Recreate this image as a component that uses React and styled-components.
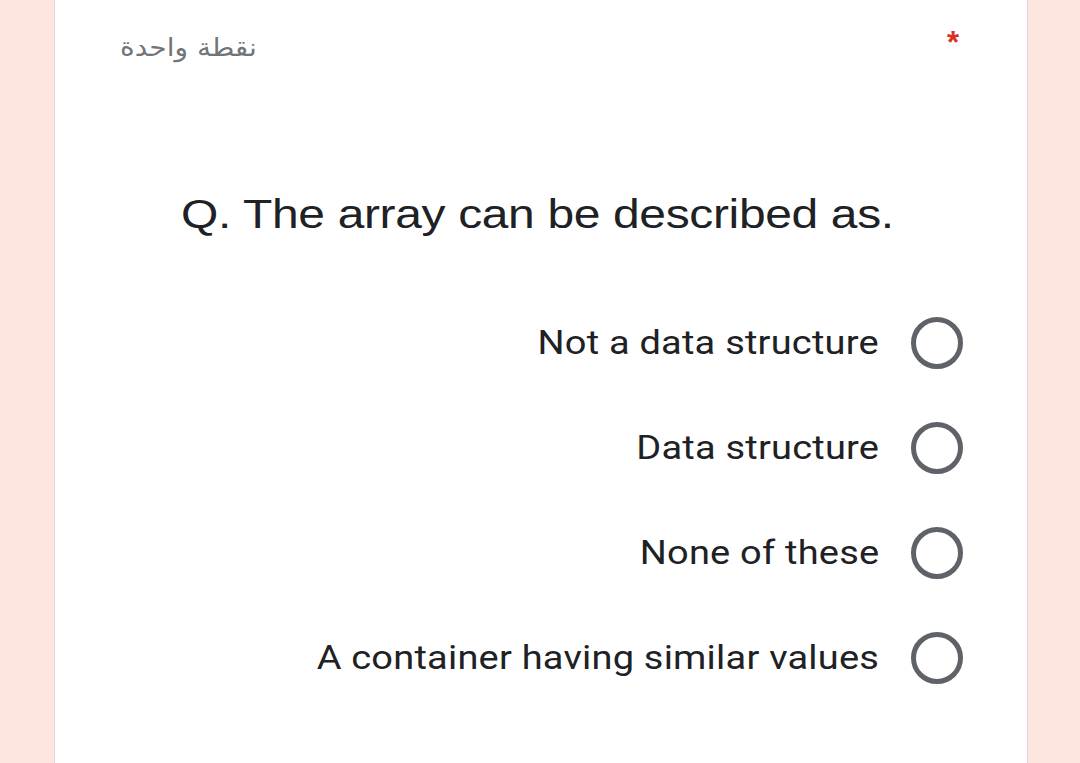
import React from 'react';
import styled, { createGlobalStyle } from 'styled-components';

const GlobalStyle = createGlobalStyle`
  html, body {
    margin: 0;
    padding: 0;
    background-color: #fde5e0;
  }
  body {
    font-family: Roboto, 'Liberation Sans', sans-serif;
    overflow: hidden;
  }
`;

const options = [
  'Not a data structure',
  'Data structure',
  'None of these',
  'A container having similar values',
];

const App = () => {
  return (
    <>
      <GlobalStyle />
      <Page>
        <Card>
          <Header>
            <Points lang="ar" dir="rtl">
              نقطة واحدة
            </Points>
            <Required>*</Required>
          </Header>

          <Question>Q. The array can be described as.</Question>

          <OptionList>
            {options.map(option => (
              <Option key={option}>
                <OptionLabel>{option}</OptionLabel>
                <Radio />
              </Option>
            ))}
          </OptionList>
        </Card>
      </Page>
    </>
  );
};

const Page = styled.div`
  display: flex;
  width: 100vw;
  height: 100vh;
  padding-left: 54px;
  box-sizing: border-box;
`;

const Card = styled.div`
  display: flex;
  flex-direction: column;
  width: 974px;
  height: 100%;
  box-sizing: border-box;
  padding: 0 64px 0 65px;
  background-color: white;
  border-left: 1px solid #e3d7d5;
  border-right: 1px solid #e3d7d5;
`;

const Header = styled.div`
  display: flex;
  align-items: center;
  justify-content: space-between;
  height: 96px;
`;

/* the screenshot is stretched sideways a little, so text gets a scaleX */
const Points = styled.span`
  display: inline-block;
  font-family: 'DejaVu Sans', sans-serif;
  font-size: 25px;
  color: #70757a;
  margin-top: -2px;
  transform: scaleX(1.12);
  transform-origin: left center;
`;

const Required = styled.span`
  font-family: 'Liberation Sans', sans-serif;
  font-size: 31px;
  font-weight: bold;
  color: #d93025;
  margin-right: 4px;
  margin-top: -10px;
`;

const Question = styled.div`
  align-self: flex-start;
  margin: 94px 0 0 61px;
  font-family: 'Liberation Sans', Arial, sans-serif;
  font-size: 41px;
  line-height: 48px;
  color: #202124;
  letter-spacing: -0.3px;
  transform: scaleX(1.17);
  transform-origin: left center;
`;

const OptionList = styled.div`
  display: flex;
  flex-direction: column;
  align-items: flex-end;
  margin-top: 52px;
`;

const Option = styled.label`
  display: flex;
  align-items: center;
  gap: 32px;
  height: 105px;
  cursor: pointer;
`;

const OptionLabel = styled.span`
  display: inline-block;
  font-family: Roboto, sans-serif;
  font-size: 33px;
  color: #202124;
  letter-spacing: 0.2px;
  transform: scaleX(1.15);
  transform-origin: right center;
`;

const Radio = styled.span`
  display: block;
  width: 52px;
  height: 52px;
  box-sizing: border-box;
  border: 5px solid #5f6368;
  border-radius: 50%;
`;

export default App;
